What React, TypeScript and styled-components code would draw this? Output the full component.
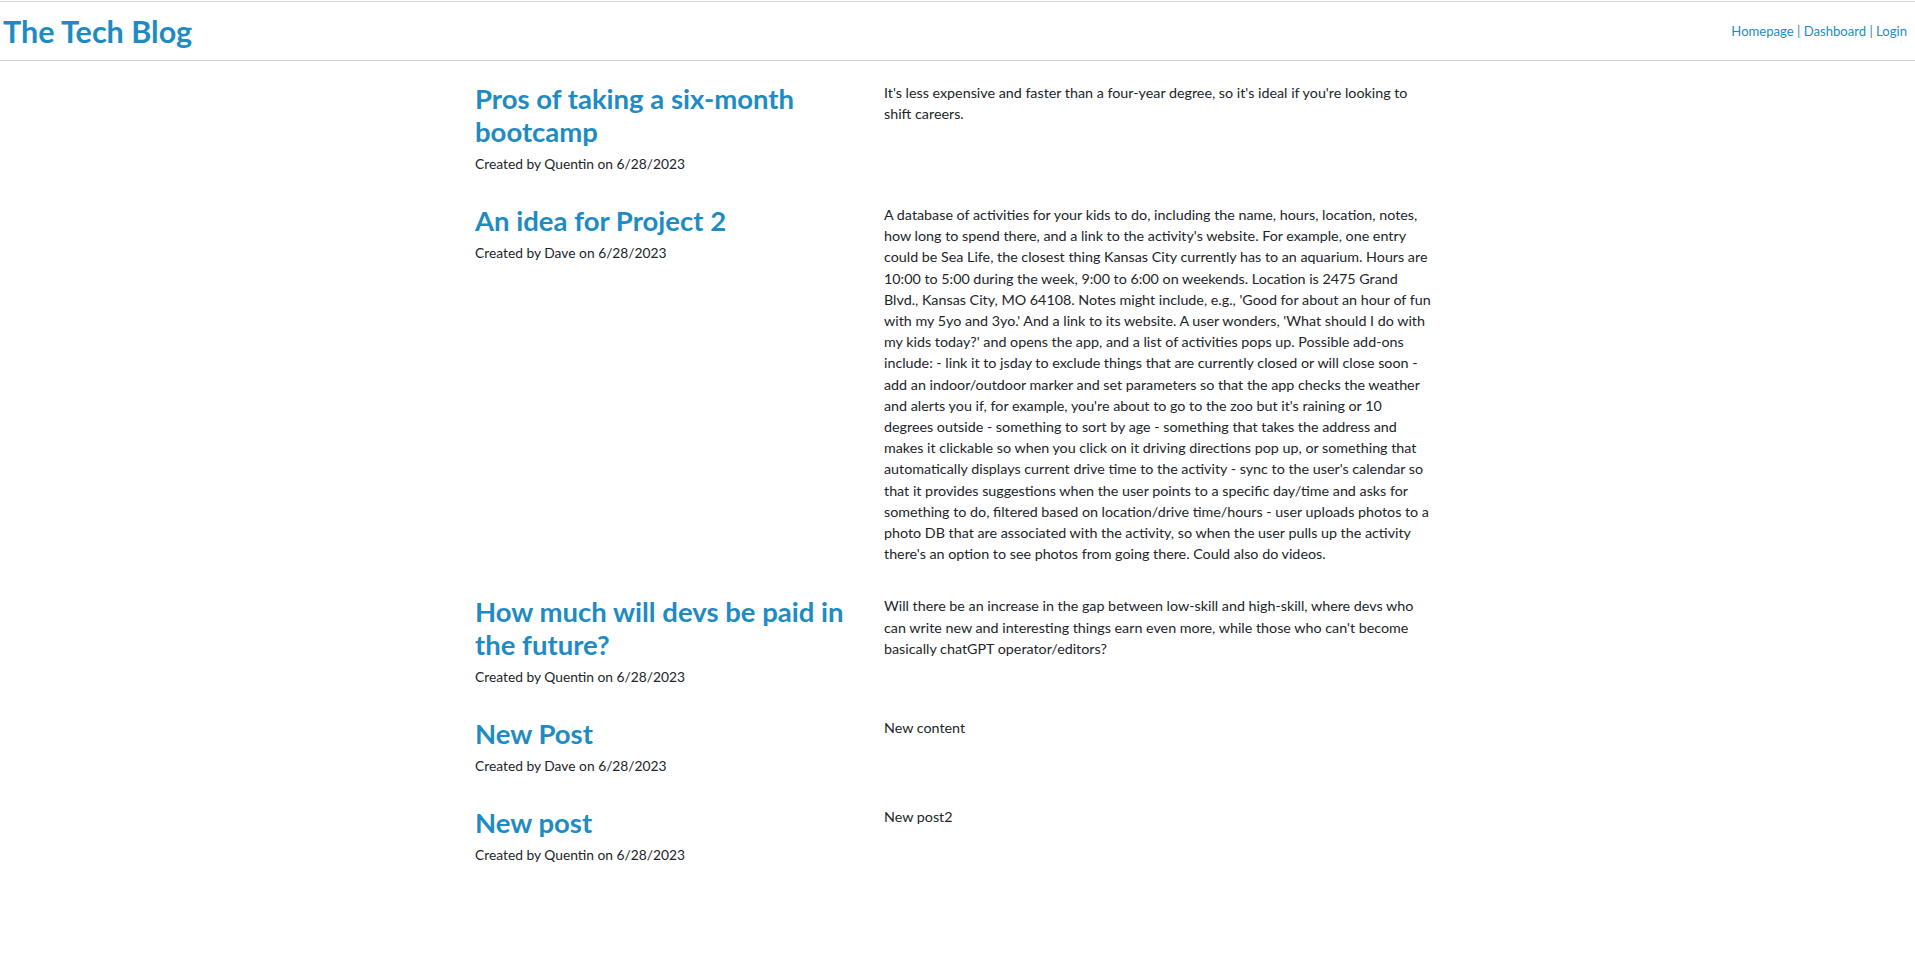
import React from "react";
import styled, { createGlobalStyle } from "styled-components";

const GlobalStyle = createGlobalStyle`
  html, body {
    margin: 0;
    padding: 0;
    background: #ffffff;
  }
  body {
    font-family: "Segoe UI", Lato, "Noto Sans", sans-serif;
    color: #212529;
  }
`;

const Header = styled.header`
  margin-top: 1px;
  border-top: 1px solid #d6d6d6;
  border-bottom: 1px solid #d0d0d0;
  height: 58px;
  display: flex;
  align-items: center;
  justify-content: space-between;
  padding: 0 8px 0 3px;
`;

const Brand = styled.h1`
  margin: 0;
  font-size: 30.5px;
  font-weight: 700;
  color: #1e8bc3;
  line-height: 1;
`;

const Nav = styled.nav`
  font-size: 13.1px;
  color: #1e8bc3;
`;

const NavLink = styled.a`
  color: #1e8bc3;
  text-decoration: none;
`;

const Main = styled.main`
  width: 965px;
  margin: 0 auto;
  padding-top: 21px;
`;

const Post = styled.article`
  display: grid;
  grid-template-columns: 409px 549px;
  margin-bottom: 31px;
`;

const Meta = styled.div`
  display: flex;
  flex-direction: column;
  padding-right: 20px;
`;

const Title = styled.h2`
  margin: 0;
  font-size: 27.5px;
  line-height: 33px;
  font-weight: 700;
  color: #1e8bc3;
`;

const Byline = styled.p`
  margin: 6px 0 0;
  font-size: 13.8px;
  line-height: 19px;
  color: #212529;
`;

const Body = styled.p`
  margin: 0;
  font-size: 14.3px;
  line-height: 21.2px;
  color: #212529;
`;

const posts = [
  {
    title: "Pros of taking a six-month bootcamp",
    author: "Quentin",
    date: "6/28/2023",
    body: "It's less expensive and faster than a four-year degree, so it's ideal if you're looking to shift careers.",
  },
  {
    title: "An idea for Project 2",
    author: "Dave",
    date: "6/28/2023",
    body: "A database of activities for your kids to do, including the name, hours, location, notes, how long to spend there, and a link to the activity's website. For example, one entry could be Sea Life, the closest thing Kansas City currently has to an aquarium. Hours are 10:00 to 5:00 during the week, 9:00 to 6:00 on weekends. Location is 2475 Grand Blvd., Kansas City, MO 64108. Notes might include, e.g., 'Good for about an hour of fun with my 5yo and 3yo.' And a link to its website. A user wonders, 'What should I do with my kids today?' and opens the app, and a list of activities pops up. Possible add-ons include: - link it to jsday to exclude things that are currently closed or will close soon - add an indoor/outdoor marker and set parameters so that the app checks the weather and alerts you if, for example, you're about to go to the zoo but it's raining or 10 degrees outside - something to sort by age - something that takes the address and makes it clickable so when you click on it driving directions pop up, or something that automatically displays current drive time to the activity - sync to the user's calendar so that it provides suggestions when the user points to a specific day/time and asks for something to do, filtered based on location/drive time/hours - user uploads photos to a photo DB that are associated with the activity, so when the user pulls up the activity there's an option to see photos from going there. Could also do videos.",
  },
  {
    title: "How much will devs be paid in the future?",
    author: "Quentin",
    date: "6/28/2023",
    body: "Will there be an increase in the gap between low-skill and high-skill, where devs who can write new and interesting things earn even more, while those who can't become basically chatGPT operator/editors?",
  },
  {
    title: "New Post",
    author: "Dave",
    date: "6/28/2023",
    body: "New content",
  },
  {
    title: "New post",
    author: "Quentin",
    date: "6/28/2023",
    body: "New post2",
  },
];

export default function App() {
  return (
    <>
      <GlobalStyle />
      <Header>
        <Brand>The Tech Blog</Brand>
        <Nav>
          <NavLink href="#">Homepage</NavLink> | <NavLink href="#">Dashboard</NavLink> |{" "}
          <NavLink href="#">Login</NavLink>
        </Nav>
      </Header>
      <Main>
        {posts.map((p, i) => (
          <Post key={i}>
            <Meta>
              <Title>{p.title}</Title>
              <Byline>
                Created by {p.author} on {p.date}
              </Byline>
            </Meta>
            <Body>{p.body}</Body>
          </Post>
        ))}
      </Main>
    </>
  );
}
